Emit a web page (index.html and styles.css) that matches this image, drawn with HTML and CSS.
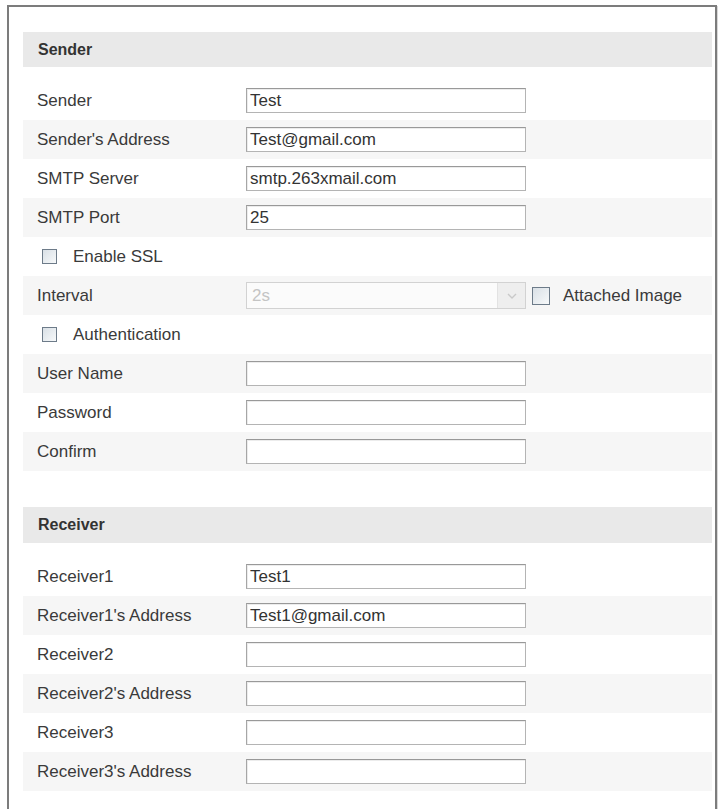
FILE: index.html
```html
<!DOCTYPE html>
<html>
<head>
<meta charset="utf-8">
<link rel="stylesheet" href="styles.css">
</head>
<body>
<div class="frame">
  <div class="section-header">Sender</div>
  <div class="rows">
    <div class="row"><span class="label">Sender</span><input class="field" type="text" value="Test"></div>
    <div class="row"><span class="label">Sender's Address</span><input class="field" type="text" value="Test@gmail.com"></div>
    <div class="row"><span class="label">SMTP Server</span><input class="field" type="text" value="smtp.263xmail.com"></div>
    <div class="row"><span class="label">SMTP Port</span><input class="field" type="text" value="25"></div>
    <div class="row check-row"><input class="box" type="checkbox"><span class="check-text">Enable SSL</span></div>
    <div class="row"><span class="label">Interval</span>
      <div class="select"><span class="select-value">2s</span><span class="select-arrow"><svg width="10" height="6" viewBox="0 0 10 6"><path d="M1 1 L5 5 L9 1" fill="none" stroke="#c9c9c9" stroke-width="1.4"/></svg></span></div>
      <input class="box attach-box" type="checkbox"><span class="attach-text">Attached Image</span>
    </div>
    <div class="row check-row"><input class="box" type="checkbox"><span class="check-text">Authentication</span></div>
    <div class="row"><span class="label">User Name</span><input class="field" type="text" value=""></div>
    <div class="row"><span class="label">Password</span><input class="field" type="password" value=""></div>
    <div class="row"><span class="label">Confirm</span><input class="field" type="password" value=""></div>
  </div>

  <div class="section-header receiver-header">Receiver</div>
  <div class="rows">
    <div class="row"><span class="label">Receiver1</span><input class="field" type="text" value="Test1"></div>
    <div class="row"><span class="label">Receiver1's Address</span><input class="field" type="text" value="Test1@gmail.com"></div>
    <div class="row"><span class="label">Receiver2</span><input class="field" type="text" value=""></div>
    <div class="row"><span class="label">Receiver2's Address</span><input class="field" type="text" value=""></div>
    <div class="row"><span class="label">Receiver3</span><input class="field" type="text" value=""></div>
    <div class="row"><span class="label">Receiver3's Address</span><input class="field" type="text" value=""></div>
  </div>
</div>
</body>
</html>
```

FILE: styles.css
```css
html, body {
  margin: 0;
  padding: 0;
  background: #ffffff;
}

body {
  font-family: "Liberation Sans", Arial, sans-serif;
  font-size: 17px;
  color: #3a3a3a;
}

.frame {
  box-sizing: border-box;
  margin: 5px 0 0 7px;
  width: 710px;
  min-height: 820px;
  border: 2px solid #7c7c7c;
  border-bottom: none;
  padding: 25px 3px 0 14px;
  box-shadow: 1px 1px 0 #d8d8d8;
}

.section-header {
  height: 35px;
  line-height: 35px;
  background: #e9e9e9;
  padding-left: 15px;
  font-weight: bold;
  font-size: 16px;
  color: #333333;
}

.receiver-header {
  margin-top: 36px;
  height: 36px;
  line-height: 36px;
}

.rows {
  margin-top: 14px;
}

.row {
  display: flex;
  align-items: center;
  height: 39px;
  padding-left: 14px;
}

.row:nth-child(even) {
  background: #f6f6f6;
}

.label {
  width: 209px;
  flex: none;
}

.field {
  box-sizing: border-box;
  width: 280px;
  height: 25px;
  margin: 0;
  padding: 0 3px;
  border: 1px solid #b4b4b4;
  border-top-color: #999999;
  border-left-color: #a6a6a6;
  box-shadow: inset 1px 1px 0 #ececec;
  background: #ffffff;
  font-family: "Liberation Sans", Arial, sans-serif;
  font-size: 17px;
  color: #333333;
  outline: none;
}

.check-row {
  padding-left: 19px;
}

.box {
  appearance: none;
  -webkit-appearance: none;
  box-sizing: border-box;
  width: 15px;
  height: 15px;
  margin: 0;
  flex: none;
  border: 1px solid #6d7b89;
  background: linear-gradient(135deg, #d9e0e6, #f7f9fa);
}

.check-text {
  margin-left: 16px;
}

.select {
  box-sizing: border-box;
  display: flex;
  align-items: stretch;
  width: 280px;
  height: 27px;
  border: 1px solid #d2d2d2;
  background: #fbfbfb;
  flex: none;
}

.select-value {
  flex: 1;
  padding-left: 5px;
  line-height: 25px;
  color: #c4c4c4;
}

.select-arrow {
  width: 27px;
  display: flex;
  align-items: center;
  justify-content: center;
  background: #eeeeee;
  border-left: 1px solid #e2e2e2;
}

.attach-box {
  width: 18px;
  height: 18px;
  margin-left: 6px;
}

.attach-text {
  margin-left: 13px;
}
```
